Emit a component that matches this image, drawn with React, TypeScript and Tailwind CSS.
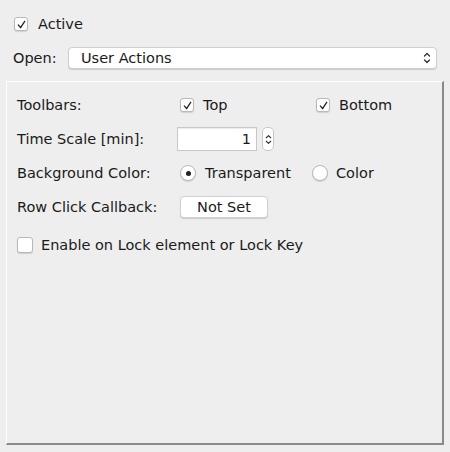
import { useState } from "react";

function Check({ checked, onClick }: { checked: boolean; onClick?: () => void }) {
  return (
    <span
      onClick={onClick}
      className="flex h-[14px] w-[14px] shrink-0 items-center justify-center rounded-[3px] border border-[#b8b8b8] bg-white shadow-[0_1px_1px_rgba(0,0,0,0.12)]"
    >
      {checked && (
        <svg viewBox="0 0 12 12" className="h-[11px] w-[11px]" fill="none" stroke="#222" strokeWidth="1.4">
          <path d="M2.5 6.5 L5 9.5 L9.5 2.5" strokeLinecap="round" strokeLinejoin="round" />
        </svg>
      )}
    </span>
  );
}

function Radio({ on }: { on: boolean }) {
  return (
    <span className="flex h-[16px] w-[16px] shrink-0 items-center justify-center rounded-full border border-[#b8b8b8] bg-white shadow-[0_1px_1px_rgba(0,0,0,0.12)]">
      {on && <span className="h-[5px] w-[5px] rounded-full bg-[#222]" />}
    </span>
  );
}

function Updown({ size = 12 }: { size?: number }) {
  return (
    <svg width={size - 4} height={size + 2} viewBox="0 0 8 14" fill="none" stroke="#333" strokeWidth="1.3">
      <path d="M1.5 5 L4 2.5 L6.5 5" strokeLinecap="round" strokeLinejoin="round" />
      <path d="M1.5 9 L4 11.5 L6.5 9" strokeLinecap="round" strokeLinejoin="round" />
    </svg>
  );
}

export default function App() {
  const [active, setActive] = useState(true);
  const [top, setTop] = useState(true);
  const [bottom, setBottom] = useState(true);
  const [lock, setLock] = useState(false);

  return (
    <div
      className="flex h-[452px] w-[450px] flex-col bg-[#eeeeee] text-[14.5px] leading-[18px] text-[#1a1a1a]"
      style={{ fontFamily: '"DejaVu Sans", "Lucida Grande", sans-serif' }}
    >
      <div className="flex items-center gap-[10px] pl-[14px] pt-[15px]">
        <Check checked={active} onClick={() => setActive(!active)} />
        <span>Active</span>
      </div>

      <div className="mt-[14px] flex items-center pl-[13px] pr-[13px]">
        <span className="w-[55px]">Open:</span>
        <div className="flex h-[22px] flex-1 items-center justify-between rounded-[4px] border border-[#d0d0d0] bg-white pl-[12px] pr-[5px] shadow-[0_1px_1px_rgba(0,0,0,0.15)]">
          <span>User Actions</span>
          <Updown />
        </div>
      </div>

      <div className="mx-[6px] mb-[7px] mt-[12px] flex flex-1 flex-col border-l border-t border-r-2 border-b-2 border-l-white border-t-white border-r-[#8a8a8a] border-b-[#8a8a8a] pl-[10px] pt-[12px]">
        <div className="grid auto-rows-[22px] grid-cols-[160px_139px_auto] items-center gap-y-[12px]">
          <span>Toolbars:</span>
          <div className="flex items-center gap-[9px] pl-[3px]">
            <Check checked={top} onClick={() => setTop(!top)} />
            <span>Top</span>
          </div>
          <div className="flex items-center gap-[9px]">
            <Check checked={bottom} onClick={() => setBottom(!bottom)} />
            <span>Bottom</span>
          </div>

          <span>Time Scale [min]:</span>
          <div className="col-span-2 flex items-center gap-[5px]">
            <div className="flex h-[24px] w-[80px] items-center justify-end border border-[#c8c8c8] bg-white pr-[5px] shadow-[inset_0_1px_1px_rgba(0,0,0,0.08)]">
              1
            </div>
            <div className="flex h-[24px] w-[12px] items-center justify-center rounded-[5px] border border-[#c8c8c8] bg-white">
              <Updown size={11} />
            </div>
          </div>

          <span>Background Color:</span>
          <div className="flex items-center gap-[9px] pl-[3px]">
            <Radio on />
            <span>Transparent</span>
          </div>
          <div className="-ml-[4px] flex items-center gap-[8px]">
            <Radio on={false} />
            <span>Color</span>
          </div>

          <span>Row Click Callback:</span>
          <div className="col-span-2 pl-[3px]">
            <button className="h-[22px] w-[88px] rounded-[4px] border border-[#d0d0d0] bg-white shadow-[0_1px_1px_rgba(0,0,0,0.15)]">
              Not Set
            </button>
          </div>
        </div>

        <div className="mt-[18px] flex items-center gap-[8px]">
          <span className="flex h-[16px] w-[16px] items-center justify-center rounded-[3px] border border-[#b8b8b8] bg-white shadow-[0_1px_1px_rgba(0,0,0,0.12)]" onClick={() => setLock(!lock)}>
            {lock && "✓"}
          </span>
          <span>Enable on Lock element or Lock Key</span>
        </div>
      </div>
    </div>
  );
}
